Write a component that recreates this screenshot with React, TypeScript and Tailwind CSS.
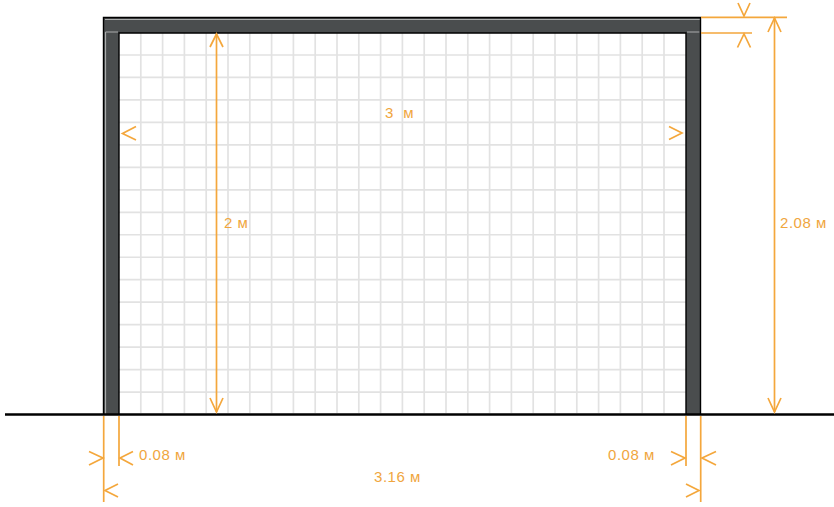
const orange = '#f4a73c'

// grid spacing measured off the drawing
const gridX = Array.from({ length: 25 }, (_, i) => 140.8 + i * 21.8)
const gridY = Array.from({ length: 16 }, (_, i) => 55 + i * 22.47)

// open arrow heads: wing, tip, wing
const heads = [
  '210,47 216.5,34 223,47',
  '210,398 216.5,412 223,398',
  '136,126.5 122.5,133.5 136,140',
  '669,126.5 682,133 669,139.5',
  '738,3 744,16 750,3',
  '737.5,47.5 744,34 750.5,47.5',
  '768,32 774.5,18 781,32',
  '768,398 774.5,412 781,398',
  '89,451.5 103,458 89,465',
  '133,451.5 120,458 133,465',
  '118,484 105,490.5 118,497',
  '671,451.5 685,458 671,465',
  '716,451.5 702,458 716,465',
  '686,484 699,490.5 686,497',
]

const labels = [
  { x: 385, y: 118, text: '3 \u00a0м' },
  { x: 224, y: 228, text: '2 м' },
  { x: 780, y: 228, text: '2.08 м' },
  { x: 139, y: 460, text: '0.08 м' },
  { x: 608, y: 460, text: '0.08 м' },
  { x: 374, y: 482, text: '3.16 м' },
]

export default function App() {
  return (
    <div className="relative w-[834px] h-[507px] bg-white overflow-hidden">
      <svg width="834" height="507" viewBox="0 0 834 507" className="absolute inset-0">
        {/* Net */}
        <g stroke="#e2e2e2" strokeWidth="1.7">
          {gridX.map((x) => (
            <line key={x} x1={x} y1="33" x2={x} y2="413" />
          ))}
          {gridY.map((y) => (
            <line key={y} x1="119" y1={y} x2="686" y2={y} />
          ))}
        </g>

        {/* Frame */}
        <rect x="104" y="18" width="596.5" height="15" fill="#4a4d4e" />
        <rect x="104" y="33" width="15" height="381" fill="#4a4d4e" />
        <rect x="686" y="33" width="14.5" height="381" fill="#4a4d4e" />
        <path d="M105 19.5H700M105.5 32H118M105.5 32V414M687 32H699.5" stroke="#a9abab" strokeWidth="1.2" fill="none" />
        <path d="M103.5 414V17.5H700.5V414M119 414V33H686V414" stroke="#000" strokeWidth="1.4" fill="none" />

        {/* Ground */}
        <line x1="5" y1="414.5" x2="834" y2="414.5" stroke="#000" strokeWidth="2.4" />

        {/* Dimensions */}
        <g stroke={orange} strokeWidth="1.7" fill="none">
          <path d="M216.5 34V412M774.5 18V412M701 17.3H787M701 33H752" />
          <path d="M103.7 416V502M119 416V466M686 416V466M700.7 416V502" />
          {heads.map((points) => (
            <polyline key={points} points={points} />
          ))}
        </g>
        {labels.map((label) => (
          <text
            key={label.x}
            x={label.x}
            y={label.y}
            className="fill-[#f0a63e] text-[15px] tracking-[0.55px] font-['Liberation_Sans',sans-serif]"
          >
            {label.text}
          </text>
        ))}
      </svg>
    </div>
  )
}
